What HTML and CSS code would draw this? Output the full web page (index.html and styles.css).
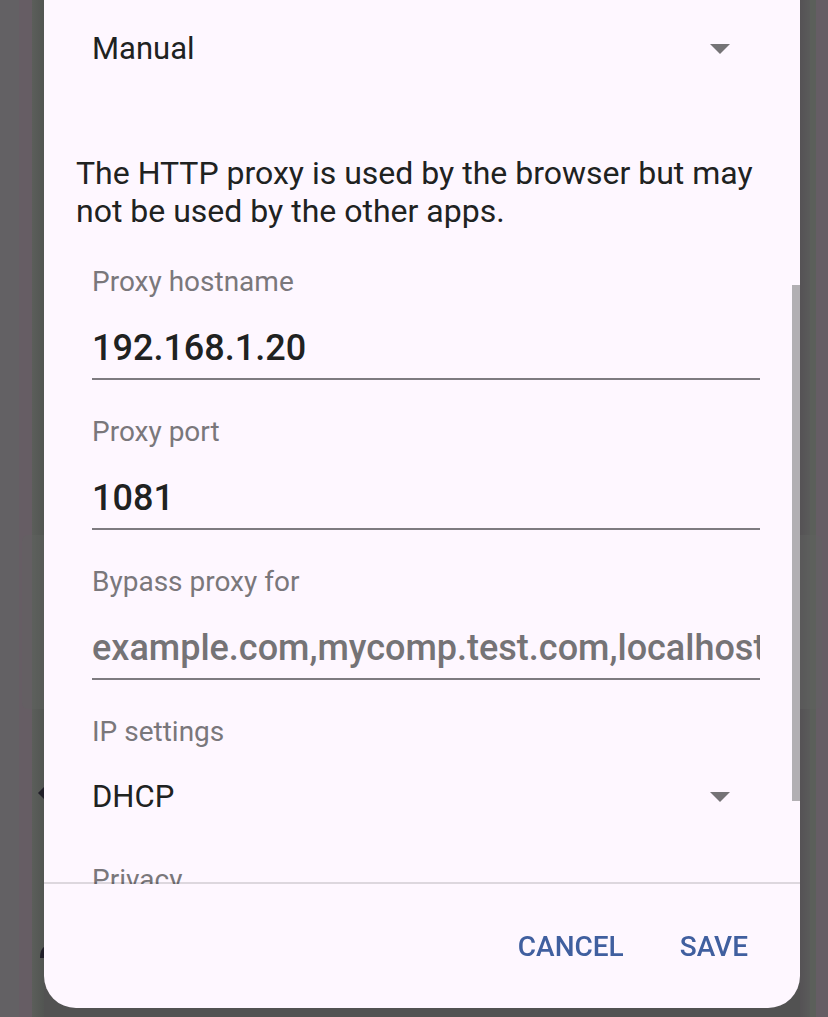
FILE: index.html
```html
<!DOCTYPE html>
<html lang="en">
<head>
<meta charset="utf-8">
<meta name="viewport" content="width=device-width, initial-scale=1">
<title>Network settings</title>
<link rel="stylesheet" href="styles.css">
</head>
<body>
<div class="backdrop" aria-hidden="true">
  <div class="backdrop-card"></div>
  <svg class="backdrop-icon backdrop-icon-chevron" viewBox="0 0 12 12"><path d="M6 0 0 6l6 6 6-6z"/></svg>
  <svg class="backdrop-icon backdrop-icon-arc" viewBox="0 0 12 12"><path d="M0 12Q0 3 5 0h7v12z"/></svg>
</div>
<form class="dialog" role="dialog" aria-label="Network settings">
  <div class="content">
    <div class="select-row proxy-mode">
      <select class="select" aria-label="Proxy"><option>Manual</option></select>
      <svg class="arrow" viewBox="0 0 20 10" aria-hidden="true"><path d="M0 0h20L10 10z"/></svg>
    </div>
    <p class="note">The HTTP proxy is used by the browser but may not be used by the other apps.</p>
    <div class="field">
      <label class="label" for="host">Proxy hostname</label>
      <input class="input" id="host" type="text" value="192.168.1.20">
    </div>
    <div class="field">
      <label class="label" for="port">Proxy port</label>
      <input class="input" id="port" type="text" value="1081">
    </div>
    <div class="field">
      <label class="label" for="bypass">Bypass proxy for</label>
      <input class="input" id="bypass" type="text" placeholder="example.com,mycomp.test.com,localhost">
    </div>
    <div class="field">
      <label class="label" for="ip">IP settings</label>
      <div class="select-row">
        <select class="select" id="ip"><option>DHCP</option></select>
        <svg class="arrow" viewBox="0 0 20 10" aria-hidden="true"><path d="M0 0h20L10 10z"/></svg>
      </div>
    </div>
    <div class="field">
      <label class="label" for="privacy">Privacy</label>
      <div class="select-row">
        <select class="select" id="privacy"><option></option></select>
      </div>
    </div>
    <div class="scrollbar"></div>
  </div>
  <div class="actions">
    <button class="button" type="button">CANCEL</button>
    <button class="button" type="submit">SAVE</button>
  </div>
</form>
</body>
</html>
```
FILE: styles.css
```css
* {
  box-sizing: border-box;
}

body {
  margin: 0;
  height: 100vh;
  padding: 0 28px 9px 44px;
  display: flex;
  overflow: hidden;
  font-family: Roboto, sans-serif;
  color: #202221;
  background: #525252;
}

/* Dimmed screen behind the dialog */
.backdrop {
  position: fixed;
  inset: 0;
  background:
    linear-gradient(to right, #636164 19px, #665d64 19px 32px, #5b5e5a 32px, #525552 44px, transparent 44px),
    linear-gradient(to left, #655d64 12px, #5b5f5a 12px 18px, #5a5b5a 18px, #555255 28px, transparent 28px);
}

.backdrop-card {
  position: absolute;
  left: 22px;
  right: 6px;
  top: 52.6%;
  height: 174px;
  border-radius: 6px;
  background: rgba(96, 100, 98, 0.35);
}

.backdrop-icon {
  position: absolute;
  width: 12px;
  height: 12px;
  fill: #211f29;
}

.backdrop-icon-chevron {
  left: 38px;
  bottom: 218px;
}

.backdrop-icon-arc {
  left: 40px;
  bottom: 59px;
}

.dialog {
  position: relative;
  flex: 1;
  min-width: 0;
  display: flex;
  flex-direction: column;
  border-radius: 0 0 32px 32px;
  background: #fef7ff;
  overflow: hidden;
}

.content {
  position: relative;
  flex: 1;
  min-height: 0;
  padding: 18px 40px 0 32px;
  overflow: hidden;
}

.select-row {
  display: flex;
  align-items: center;
  height: 62px;
  padding-right: 30px;
}

.proxy-mode {
  margin-left: 16px;
}

.select {
  flex: 1;
  height: 62px;
  padding: 0;
  border: 0;
  appearance: none;
  background: transparent;
  color: inherit;
  font: 400 31px/38px Roboto, sans-serif;
}

.arrow {
  flex: none;
  width: 20px;
  height: 10px;
  fill: #757376;
}

.note {
  margin: 74px 0 34px;
  font-size: 32px;
  line-height: 38px;
}

.field {
  display: flex;
  flex-direction: column;
  margin: 0 0 34px 16px;
}

.label {
  margin-bottom: 16px;
  font-size: 28px;
  line-height: 36px;
  color: #7a777b;
}

.input {
  width: 100%;
  height: 64px;
  padding: 2px 0 0;
  border: 0;
  border-bottom: 2px solid #7e7b80;
  border-radius: 0;
  outline: 0;
  background: transparent;
  color: inherit;
  font: 500 36px/42px Roboto, sans-serif;
}

.input::placeholder {
  color: #757376;
  opacity: 1;
}

.scrollbar {
  position: absolute;
  top: 285px;
  right: 0;
  width: 8px;
  height: 516px;
  background: #b2afb3;
}

/* The divider overlays the last rows of the scrolled content */
.actions {
  position: relative;
  display: flex;
  justify-content: flex-end;
  gap: 8px;
  margin-top: -2px;
  padding: 31px 28px 29px;
  border-top: 2px solid rgba(0, 0, 0, 0.13);
}

.button {
  height: 64px;
  padding: 0 24px;
  border: 0;
  background: transparent;
  color: #405f9f;
  font: 500 28px/32px Roboto, sans-serif;
}
```
